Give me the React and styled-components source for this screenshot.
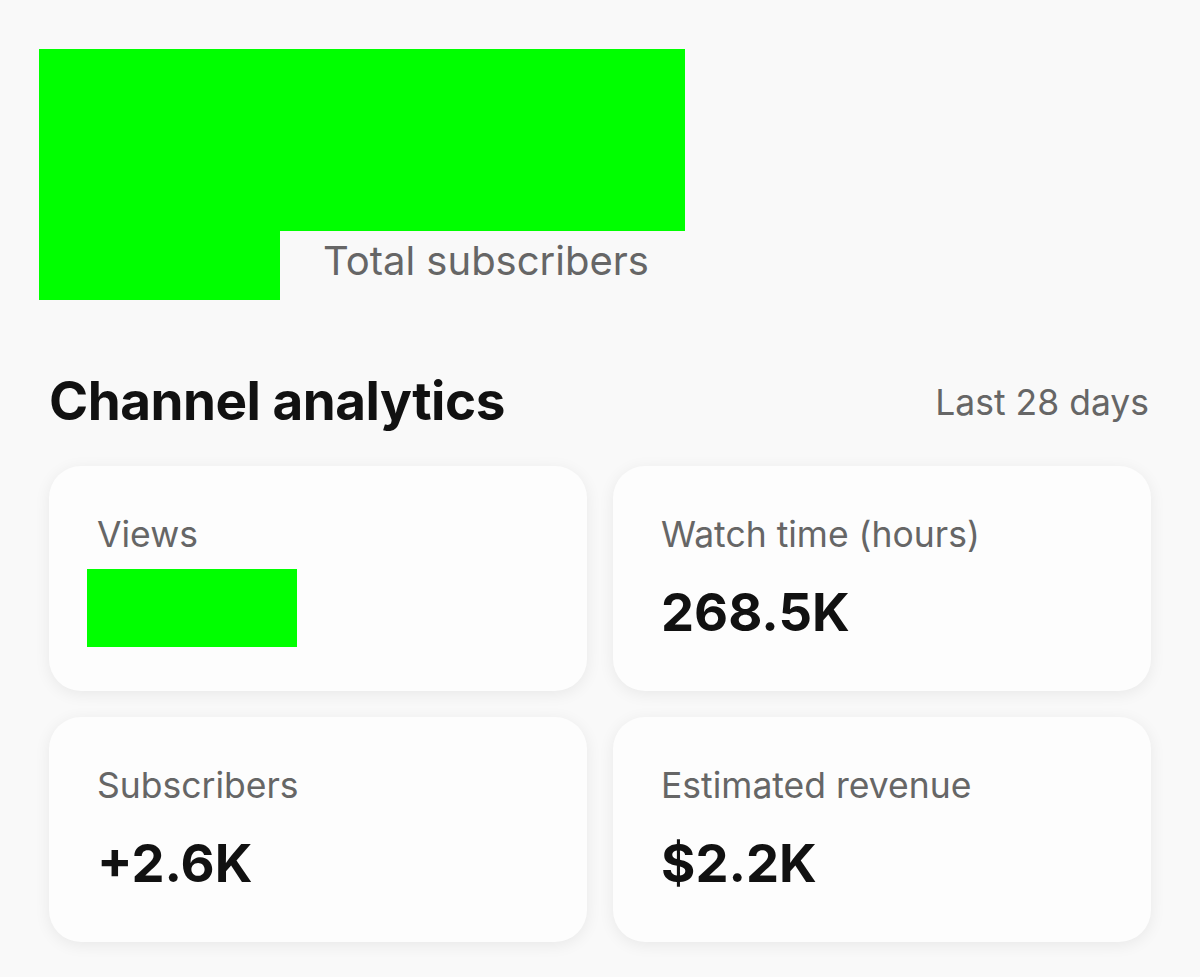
import React from 'react';
import styled, { createGlobalStyle } from 'styled-components';

const GlobalStyle = createGlobalStyle`
    html, body {
        margin: 0;
        padding: 0;
        background: #f9f9f9;
    }

    body {
        font-family: Inter, "Noto Sans", "Liberation Sans", sans-serif;
        color: #111;
    }
`;

const metrics = [
    { label: 'Views', value: null, redact: { width: 210, height: 78 } },
    { label: 'Watch time (hours)', value: '268.5K' },
    { label: 'Subscribers', value: '+2.6K' },
    { label: 'Estimated revenue', value: '$2.2K' },
];

const App = () => {
    return (
        <>
            <GlobalStyle />
            <Page>
                <Hero>
                    <Redacted $width={646} $height={182} />
                    <HeroRow>
                        <Redacted $width={241} $height={69} />
                        <HeroCaption>Total subscribers</HeroCaption>
                    </HeroRow>
                </Hero>

                <SectionHeader>
                    <Title>Channel analytics</Title>
                    <Period>Last 28 days</Period>
                </SectionHeader>

                <Grid>
                    {metrics.map((m) => (
                        <Card key={m.label}>
                            <Label>{m.label}</Label>
                            {m.redact ? (
                                <ValueRedacted
                                    $width={m.redact.width}
                                    $height={m.redact.height}
                                />
                            ) : (
                                <Value>{m.value}</Value>
                            )}
                        </Card>
                    ))}
                </Grid>
            </Page>
        </>
    );
};

export default App;

const Page = styled.div`
    width: 1200px;
    min-height: 977px;
    padding: 49px 49px 0 49px;
    box-sizing: border-box;

    display: flex;
    flex-direction: column;
`;

const Hero = styled.div`
    margin-left: -10px;

    display: flex;
    flex-direction: column;
`;

const HeroRow = styled.div`
    display: flex;
    flex-direction: row;
    align-items: flex-start;
`;

const Redacted = styled.div`
    width: ${({ $width }) => $width}px;
    height: ${({ $height }) => $height}px;
    background: #00ff00;
    flex-shrink: 0;
`;

const HeroCaption = styled.span`
    margin: 6px 0 0 43px;

    font-size: 40px;
    line-height: 48px;
    color: #666;
`;

const SectionHeader = styled.div`
    margin-top: 71px;

    display: flex;
    flex-direction: row;
    justify-content: space-between;
    align-items: center;
`;

const Title = styled.h2`
    margin: 0;

    font-size: 53px;
    font-weight: 700;
    line-height: 60px;
    letter-spacing: -0.5px;
    color: #111;
`;

const Period = styled.span`
    margin: 4px 2px 0 0;

    font-size: 35.5px;
    line-height: 40px;
    color: #666;
`;

const Grid = styled.div`
    margin-top: 35px;

    display: grid;
    grid-template-columns: 1fr 1fr;
    gap: 26px;
`;

const Card = styled.div`
    height: 225px;
    padding: 48px 48px 0 48px;
    box-sizing: border-box;

    display: flex;
    flex-direction: column;
    align-items: flex-start;

    border-radius: 32px;
    background: #fdfdfd;
    box-shadow: 0 3px 16px rgba(0, 0, 0, 0.07);
`;

const Label = styled.div`
    font-size: 35.5px;
    line-height: 41px;
    color: #666;
`;

const Value = styled.div`
    margin-top: 27px;

    font-size: 52.5px;
    font-weight: 700;
    line-height: 60px;
    color: #111;
`;

const ValueRedacted = styled(Redacted)`
    margin: 14px 0 0 -10px;
`;
